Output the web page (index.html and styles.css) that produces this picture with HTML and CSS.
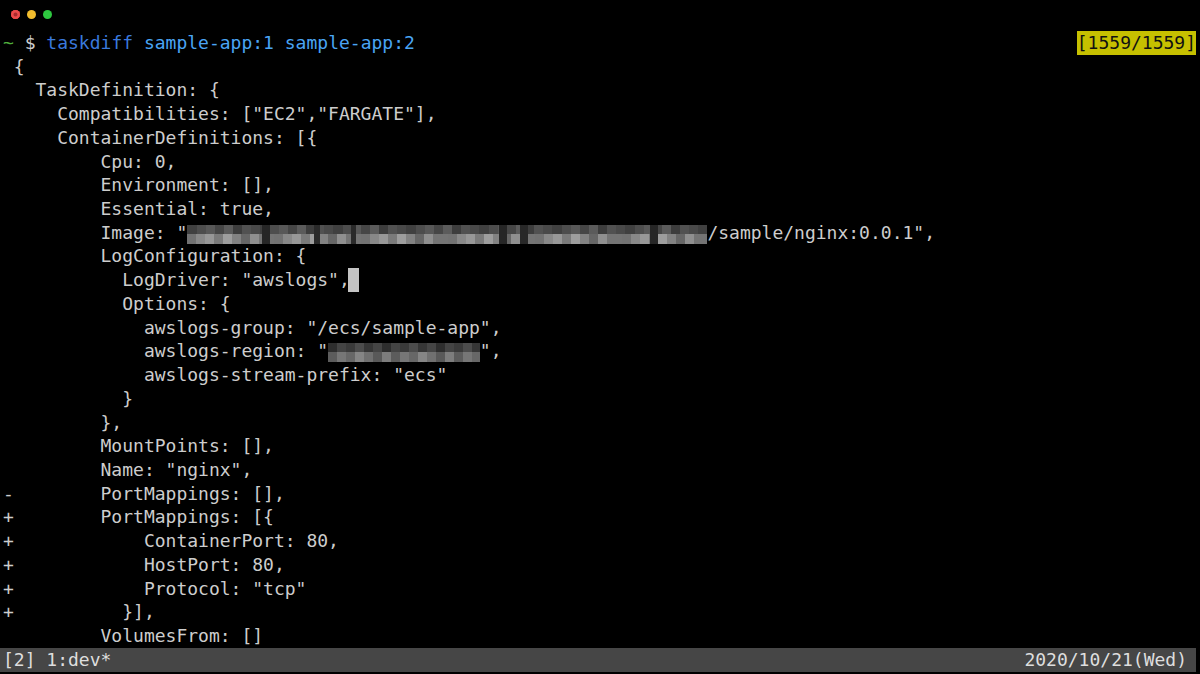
FILE: index.html
```html
<!DOCTYPE html>
<html>
<head>
<meta charset="utf-8">
<title>taskdiff</title>
<link rel="stylesheet" href="styles.css">
</head>
<body>
<div class="term">
  <div class="titlebar">
    <span class="light red"></span>
    <span class="light yellow"></span>
    <span class="light green"></span>
  </div>
  <div class="screen">
    <div class="line prompt-line"><span><span class="tilde">~</span> $ <span class="cmd">taskdiff</span> <span class="arg">sample-app:1 sample-app:2</span></span><span class="badge">[1559/1559]</span></div>
    <div class="line"> {</div>
    <div class="line">   TaskDefinition: {</div>
    <div class="line">     Compatibilities: ["EC2","FARGATE"],</div>
    <div class="line">     ContainerDefinitions: [{</div>
    <div class="line">         Cpu: 0,</div>
    <div class="line">         Environment: [],</div>
    <div class="line">         Essential: true,</div>
    <div class="line">         Image: "<span class="blur blur-image"></span>/sample/nginx:0.0.1",</div>
    <div class="line">         LogConfiguration: {</div>
    <div class="line">           LogDriver: "awslogs",<span class="cursor"></span></div>
    <div class="line">           Options: {</div>
    <div class="line">             awslogs-group: "/ecs/sample-app",</div>
    <div class="line">             awslogs-region: "<span class="blur blur-region"></span>",</div>
    <div class="line">             awslogs-stream-prefix: "ecs"</div>
    <div class="line">           }</div>
    <div class="line">         },</div>
    <div class="line">         MountPoints: [],</div>
    <div class="line">         Name: "nginx",</div>
    <div class="line">-        PortMappings: [],</div>
    <div class="line">+        PortMappings: [{</div>
    <div class="line">+            ContainerPort: 80,</div>
    <div class="line">+            HostPort: 80,</div>
    <div class="line">+            Protocol: "tcp"</div>
    <div class="line">+          }],</div>
    <div class="line">         VolumesFrom: []</div>
    <div class="status"><span>[2] 1:dev*</span><span>2020/10/21(Wed)</span></div>
  </div>
</div>
</body>
</html>
```

FILE: styles.css
```css
* { box-sizing: border-box; }
html, body {
  margin: 0;
  padding: 0;
  background: #000;
}
.term {
  width: 1200px;
  height: 674px;
  background: #000;
  color: #cdcdcd;
  font-family: "DejaVu Sans Mono", "Liberation Mono", monospace;
  font-size: 18px;
  overflow: hidden;
}
.titlebar {
  height: 31px;
  display: flex;
  align-items: flex-start;
  gap: 7px;
  padding: 10px 0 0 11px;
}
.light {
  width: 9px;
  height: 9px;
  border-radius: 50%;
  display: block;
}
.light.red { background: #ec4a4b; box-shadow: inset 0 0 0 2.5px #ec4a4b, inset 0 0 0 9px #a82a2d; }
.light.yellow { background: #f3bd2e; }
.light.green { background: #2ec840; }
.screen {
  padding: 0 4px 0 3px;
}
.line {
  height: 23.72px;
  line-height: 23.72px;
  white-space: pre;
}
.prompt-line {
  display: flex;
  justify-content: space-between;
}
.tilde { color: #4fae3c; }
.cmd { color: #3a79dd; }
.arg { color: #4aa5f4; }
.badge {
  background: #c6c000;
  color: #111;
}
.cursor {
  display: inline-block;
  width: 11px;
  height: 24px;
  vertical-align: top;
  background: #c4c4c4;
  margin-left: -2px;
}
.blur {
  display: inline-block;
  height: 23.72px;
  vertical-align: top;
  background-repeat: no-repeat;
}
.blur-image {
  width: 48ch;
  background-image:
    linear-gradient(90deg, transparent 0 14.5%, #262626 14.5% 16%, transparent 16% 24.5%, #2a2a2a 24.5% 25.5%, transparent 25.5% 31.5%, #2a2a2a 31.5% 32.5%, transparent 32.5% 60%, #262626 60% 61.5%, transparent 61.5% 64%, #282828 64% 65.5%, transparent 65.5% 89%, #262626 89% 90.5%, transparent 90.5% 100%),
    repeating-linear-gradient(90deg, #404040 0 10px, #4d4d4d 10px 19px, #585858 19px 28px, #464646 28px 37px, #5b5b5b 37px 46px, #3d3d3d 46px 55px, #515151 55px 64px, #494949 64px 73px),
    repeating-linear-gradient(90deg, #727272 0 9px, #888 9px 18px, #979797 18px 27px, #7a7a7a 27px 36px, #9d9d9d 36px 45px, #828282 45px 54px, #666 54px 63px, #8f8f8f 63px 72px, #747474 72px 87px);
  background-size: 100% 19px, 100% 9px, 100% 10px;
  background-position: 0 4px, 0 4px, 0 13px;
}
.blur-region {
  width: 14ch;
  background-image:
    repeating-linear-gradient(90deg, #2e2e2e 0 9px, #444 9px 18px, #3a3a3a 18px 27px, #4c4c4c 27px 36px, #363636 36px 45px, #454545 45px 54px),
    repeating-linear-gradient(90deg, #5c5c5c 0 9px, #767676 9px 18px, #676767 18px 27px, #858585 27px 36px, #707070 36px 45px, #595959 45px 54px, #7d7d7d 54px 63px);
  background-size: 100% 9px, 100% 10px;
  background-position: 0 4px, 0 13px;
}
.status {
  height: 24px;
  line-height: 24px;
  background: #464646;
  color: #dedede;
  display: flex;
  justify-content: space-between;
  padding: 0 9px 0 3px;
  margin-left: -3px;
  white-space: pre;
}
```
